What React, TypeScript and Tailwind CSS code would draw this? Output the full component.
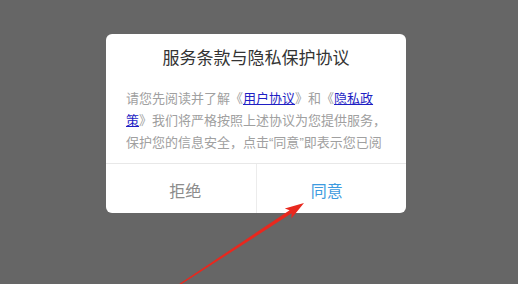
import React from "react";

export default function App() {
  const font = { fontFamily: '"Noto Sans CJK SC", "Noto Sans", sans-serif' };
  return (
    <div className="relative w-[518px] h-[284px] overflow-hidden bg-[#666666]" style={font}>
      <div className="pt-[34px] pl-[106px]">
        <div className="w-[300px] rounded-[6px] bg-white overflow-hidden">
          <div className="pt-[11px] text-center text-[17px] leading-[24px] text-[#333333]">
            服务条款与隐私保护协议
          </div>
          <div className="mt-[18px] px-[20px] pb-[10px]">
            <div className="h-[66px] overflow-hidden text-[13px] leading-[22px] text-[#a0a0a0]">
              <div className="whitespace-nowrap">
                请您先阅读并了解《<span className="text-[#1f1fc4] underline">用户协议</span>》和《<span className="text-[#1f1fc4] underline">隐私政</span>
              </div>
              <div className="whitespace-nowrap">
                <span className="text-[#1f1fc4] underline">策</span>》我们将严格按照上述协议为您提供服务，
              </div>
              <div className="whitespace-nowrap">
                保护您的信息安全，点击<span className="font-['Liberation_Sans']">“</span>同意<span className="font-['Liberation_Sans']">”</span>即表示您已阅
              </div>
            </div>
          </div>
          <div className="flex h-[50px] border-t border-[#e8e8e8]">
            <button className="flex-1 flex items-center justify-center pl-[9px] pt-[2px] text-[16px] text-[#8c8c8c]">
              拒绝
            </button>
            <div className="w-px bg-[#ececec]" />
            <button className="flex-1 flex items-center justify-center pr-[9px] pt-[2px] text-[16px] text-[#3d9be0]">
              同意
            </button>
          </div>
        </div>
      </div>
      <svg className="absolute left-0 top-0" width="518" height="284" viewBox="0 0 518 284">
        <polygon
          points="304,203 291.4,218.4 291.6,213.3 174.6,288.5 174,287.5 289.6,210.2 284.8,208.4"
          fill="#e8281e"
        />
      </svg>
    </div>
  );
}
